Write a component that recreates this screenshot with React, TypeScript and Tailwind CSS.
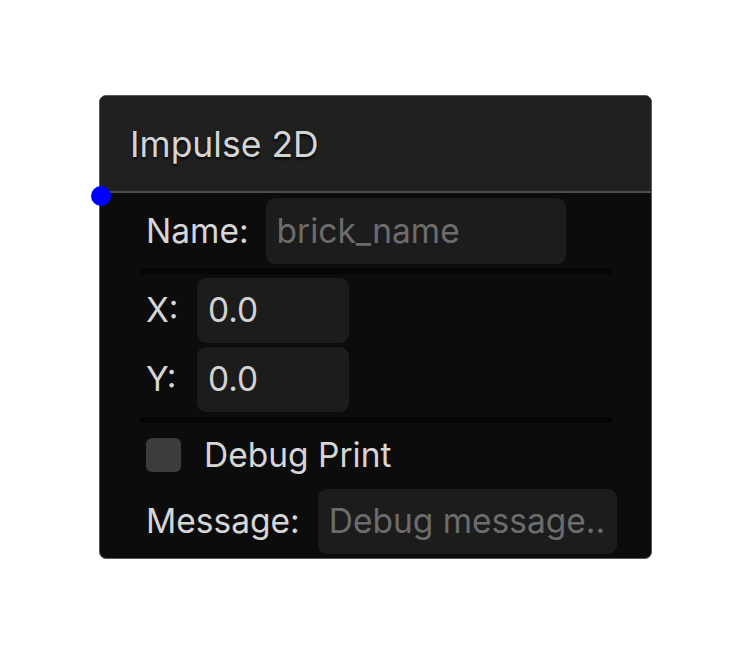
const FONT = "font-['Inter','Noto_Sans',sans-serif]";

function Field({
  width,
  value,
  placeholder,
}: {
  width: string;
  value?: string;
  placeholder?: string;
}) {
  return (
    <div
      className={`flex h-[65px] items-center rounded-[9px] bg-[#1c1c1c] pl-[11px] text-[33.5px] ${width}`}
    >
      {value ? (
        <span className="text-[#d2d2d2]">{value}</span>
      ) : (
        <span className="text-[#6c6c6c]">{placeholder}</span>
      )}
    </div>
  );
}

function Divider() {
  return <div className="h-[6px] w-[472px] bg-[#050505]" />;
}

export default function App() {
  return (
    <div className={`h-[660px] w-[752px] bg-white pl-[99px] pt-[95px] ${FONT}`}>
      <div className="relative w-[553px] rounded-[7px] border border-[#5a5a5a] bg-[#0c0c0c]">
        {/* header */}
        <div className="flex h-[97px] items-center rounded-t-[6px] border-b-2 border-[#4c4c4c] bg-[#202020] pl-[30px] pt-[2px]">
          <h2 className="text-[35.5px] text-[#d4d4d4] [text-shadow:0_2px_3px_rgba(0,0,0,0.9)]">
            Impulse 2D
          </h2>
        </div>

        {/* port */}
        <span className="absolute left-[-9px] top-[90px] h-[20px] w-[20px] rounded-full bg-[#0000ff]" />

        {/* body */}
        <div className="flex flex-col pb-[4px] pl-[40px] pt-[5px] text-[33.5px] text-[#d6d6d6]">
          <div className="flex items-center gap-[17px] pl-[6px]">
            <span>Name:</span>
            <Field width="w-[300px] h-[66px]" placeholder="brick_name" />
          </div>
          <div className="mt-[4px]">
            <Divider />
          </div>

          <div className="mt-[4px] grid grid-cols-[51px_152px] gap-y-[4px] pl-[6px]">
            <span className="self-center">X:</span>
            <Field width="w-[152px]" value="0.0" />
            <span className="self-center">Y:</span>
            <Field width="w-[152px]" value="0.0" />
          </div>
          <div className="mt-[5px]">
            <Divider />
          </div>

          <div className="flex h-[64px] items-center gap-[23px] pl-[6px]">
            <span className="h-[34px] w-[35px] rounded-[6px] bg-[#3c3c3c]" />
            <span>Debug Print</span>
          </div>

          <div className="mt-[2px] flex items-center gap-[18px] pl-[6px]">
            <span>Message:</span>
            <Field width="w-[299px]" placeholder="Debug message.." />
          </div>
        </div>
      </div>
    </div>
  );
}
